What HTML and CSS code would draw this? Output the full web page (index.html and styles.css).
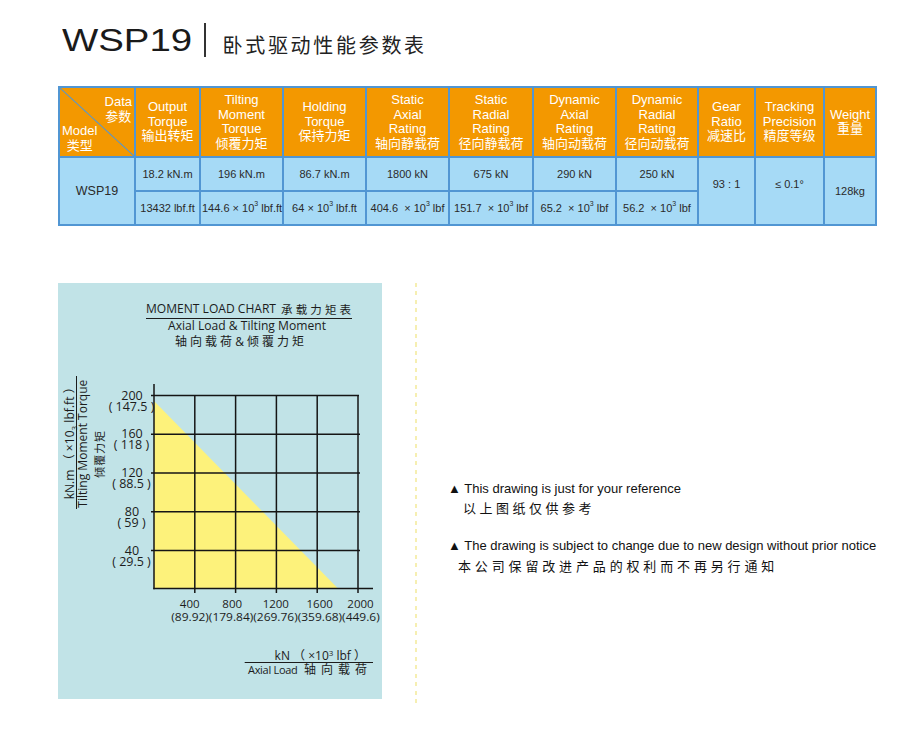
FILE: index.html
```html
<!DOCTYPE html>
<html lang="zh-CN">
<head>
<meta charset="utf-8">
<title>WSP19 卧式驱动性能参数表</title>
<link rel="stylesheet" href="styles.css">
</head>
<body>
<div class="page">
  <header class="title-row">
    <span class="model-name">WSP19</span>
    <span class="title-bar"></span>
    <h1 class="title-cn">卧式驱动性能参数表</h1>
  </header>

  <table class="spec">
    <colgroup>
      <col class="w76"><col class="w65"><col class="w83"><col class="w83"><col class="w83"><col class="w84"><col class="w83"><col class="w82"><col class="w57"><col class="w69"><col class="w52">
    </colgroup>
    <tr class="head">
      <th class="diag">
        <div class="diag-box">
          <span class="d-top">Data<br>参数</span>
          <span class="d-bot">Model<br>类型</span>
        </div>
      </th>
      <th>Output<br>Torque<br>输出转矩</th>
      <th>Tilting<br>Moment<br>Torque<br>倾覆力矩</th>
      <th>Holding<br>Torque<br>保持力矩</th>
      <th>Static<br>Axial<br>Rating<br>轴向静载荷</th>
      <th>Static<br>Radial<br>Rating<br>径向静载荷</th>
      <th>Dynamic<br>Axial<br>Rating<br>轴向动载荷</th>
      <th>Dynamic<br>Radial<br>Rating<br>径向动载荷</th>
      <th>Gear<br>Ratio<br>减速比</th>
      <th>Tracking<br>Precision<br>精度等级</th>
      <th>Weight<br>重量</th>
    </tr>
    <tr class="row">
      <td rowspan="2" class="model-cell">WSP19</td>
      <td>18.2 kN.m</td>
      <td>196 kN.m</td>
      <td>86.7 kN.m</td>
      <td>1800 kN</td>
      <td>675 kN</td>
      <td>290 kN</td>
      <td>250 kN</td>
      <td rowspan="2" class="raised">93 : 1</td>
      <td rowspan="2" class="raised">≤ 0.1°</td>
      <td rowspan="2">128kg</td>
    </tr>
    <tr class="row">
      <td>13432 lbf.ft</td>
      <td>144.6 × 10<sup>3</sup> lbf.ft</td>
      <td>64 × 10<sup>3</sup> lbf.ft</td>
      <td>404.6 &nbsp;× 10<sup>3</sup> lbf</td>
      <td>151.7 &nbsp;× 10<sup>3</sup> lbf</td>
      <td>65.2 &nbsp;× 10<sup>3</sup> lbf</td>
      <td>56.2 &nbsp;× 10<sup>3</sup> lbf</td>
    </tr>
  </table>

  <section class="lower">
    <div class="chart-panel">
      <svg class="chart" width="324" height="416" viewBox="0 0 324 416">
        <text x="88" y="30" class="t12" textLength="130" lengthAdjust="spacingAndGlyphs">MOMENT LOAD CHART</text>
        <text x="223" y="30.5" class="t11" textLength="70">承载力矩表</text>
        <line x1="88" y1="35.5" x2="294" y2="35.5" class="rule"/>
        <text x="110" y="47" class="t12" textLength="158" lengthAdjust="spacingAndGlyphs">Axial Load &amp; Tilting Moment</text>
        <text x="117" y="63" class="t12" textLength="129">轴向载荷&amp;倾覆力矩</text>

        <text transform="translate(16 216.3) rotate(-90)" class="t12" textLength="118">kN.m （ ×10<tspan class="sub" dy="3">3</tspan><tspan dy="-3"> lbf.ft ）</tspan></text>
        <line x1="18.5" y1="93" x2="18.5" y2="226" class="rule"/>
        <text transform="translate(29 224.7) rotate(-90)" class="t12" textLength="128" lengthAdjust="spacingAndGlyphs">Tilting Moment Torque</text>
        <text transform="translate(45.5 194.7) rotate(-90)" class="t10" textLength="46.7">倾覆力矩</text>

        <polygon points="96,118 96,305.5 280,305.5" class="area"/>

        <g class="grid">
          <line x1="93" y1="112.5" x2="301" y2="112.5"/>
          <line x1="93" y1="151.25" x2="302" y2="151.25"/>
          <line x1="93" y1="190" x2="302" y2="190"/>
          <line x1="93" y1="228.75" x2="302" y2="228.75"/>
          <line x1="93" y1="267.5" x2="302" y2="267.5"/>
          <line x1="136.8" y1="112.5" x2="136.8" y2="310"/>
          <line x1="177.6" y1="112.5" x2="177.6" y2="310"/>
          <line x1="218.4" y1="112.5" x2="218.4" y2="310"/>
          <line x1="259.2" y1="112.5" x2="259.2" y2="310"/>
          <line x1="300" y1="112.5" x2="300" y2="310"/>
          <line x1="96" y1="101" x2="96" y2="306.2"/>
          <line x1="95.3" y1="305.5" x2="315" y2="305.5"/>
        </g>

        <g class="ylab">
          <text x="74" y="116.5">200</text>
          <text x="73.5" y="127.5">( 147.5 )</text>
          <text x="74" y="155.25">160</text>
          <text x="73.5" y="166.25">( 118 )</text>
          <text x="74" y="194">120</text>
          <text x="73.5" y="205">( 88.5 )</text>
          <text x="74" y="232.75">80</text>
          <text x="73.5" y="243.75">( 59 )</text>
          <text x="74" y="271.5">40</text>
          <text x="73.5" y="282.5">( 29.5 )</text>
        </g>

        <g class="xlab">
          <text x="131.7" y="324.7">400</text>
          <text x="174.2" y="324.7">800</text>
          <text x="217.8" y="324.7">1200</text>
          <text x="261.7" y="324.7">1600</text>
          <text x="302.5" y="324.7">2000</text>
        </g>
        <text x="113.3" y="338" class="t115" textLength="208.4" lengthAdjust="spacingAndGlyphs">(89.92)(179.84)(269.76)(359.68)(449.6)</text>

        <text x="308" y="376.5" class="t12 end">kN （ ×10<tspan class="sup" dy="-4">3</tspan><tspan dy="4"> lbf ）</tspan></text>
        <line x1="186.7" y1="379.5" x2="315" y2="379.5" class="rule"/>
        <text x="190" y="390.5" class="t11b">Axial Load</text>
        <text x="246" y="391" class="t12" textLength="63">轴向载荷</text>
      </svg>
    </div>
    <div class="divider"></div>
    <div class="notes">
      <p class="note-en">▲ This drawing is just for your reference</p>
      <p class="note-cn n1">以上图纸仅供参考</p>
      <p class="note-en second">▲ The drawing is subject to change due to new design without prior notice</p>
      <p class="note-cn n2">本公司保留改进产品的权利而不再另行通知</p>
    </div>
  </section>
</div>
</body>
</html>
```

FILE: styles.css
```css
* { box-sizing: border-box; }

html, body {
  margin: 0;
  padding: 0;
  background: #ffffff;
}

body {
  font-family: "Liberation Sans", "Noto Sans CJK SC", sans-serif;
  color: #222222;
}

.page {
  width: 924px;
  height: 738px;
  overflow: hidden;
}

/* ---------- title ---------- */
.title-row {
  display: flex;
  align-items: center;
  height: 57px;
  padding-top: 23px;
  padding-left: 62px;
}

.model-name {
  display: inline-block;
  font-family: "Liberation Sans", sans-serif;
  font-size: 32px;
  line-height: 32px;
  color: #1a1a1a;
  transform: scaleX(1.2);
  transform-origin: left center;
}

.title-bar {
  width: 2px;
  height: 34px;
  background: #333333;
  margin-left: 34px;
}

.title-cn {
  margin: 9px 0 0 16px;
  font-family: "Noto Sans CJK SC", sans-serif;
  font-weight: 400;
  font-size: 20px;
  line-height: 24px;
  letter-spacing: 2.7px;
  color: #222222;
}

/* ---------- spec table ---------- */
.spec {
  margin: 29px 0 0 58px;
  width: 819px;
  table-layout: fixed;
  border-collapse: collapse;
  font-family: "Liberation Sans", "Noto Sans CJK SC", sans-serif;
}

.w76 { width: 76px; }
.w65 { width: 65px; }
.w83 { width: 83px; }
.w84 { width: 84px; }
.w82 { width: 82px; }
.w57 { width: 57px; }
.w69 { width: 69px; }
.w52 { width: 52px; }

.spec th,
.spec td {
  border: 2px solid #5196d3;
  padding: 0 1px;
  text-align: center;
  vertical-align: middle;
  white-space: nowrap;
}

.spec .head { height: 70px; }

.spec th {
  background: #f39800;
  color: #ffffff;
  font-weight: 400;
  font-size: 13px;
  line-height: 14.5px;
}

.spec th.diag {
  padding: 0;
  background:
    linear-gradient(to top right, transparent calc(50% - 1px), #5196d3 50%, transparent calc(50% + 1px)),
    #f39800;
}

.diag-box {
  height: 68px;
  display: flex;
  flex-direction: column;
  justify-content: space-between;
  padding: 7px 2px 3px 2px;
}

.d-top {
  align-self: flex-end;
  text-align: center;
}

.d-bot {
  align-self: flex-start;
  text-align: center;
}

.spec .row { height: 34px; }

.spec td {
  background: #a6daf6;
  color: #2a2a2a;
  font-size: 11px;
  line-height: 13px;
}

.spec td.model-cell {
  font-size: 12.5px;
}

.spec td.raised {
  padding-bottom: 13px;
}

.spec sup {
  font-size: 7px;
  line-height: 0;
  position: relative;
  top: -1px;
}

/* ---------- lower section ---------- */
.lower {
  display: flex;
  align-items: flex-start;
  margin-top: 57px;
}

.chart-panel {
  margin-left: 58px;
  width: 324px;
  height: 416px;
  background: #c1e3e7;
}

.chart {
  display: block;
}

.chart text {
  font-family: "Open Sans", "Noto Sans CJK SC", sans-serif;
  fill: #1c1c1c;
}

.chart .t12 { font-size: 12px; }
.chart .t11 { font-size: 11.5px; }
.chart .t11b { font-size: 11px; letter-spacing: -0.3px; }
.chart .t10 { font-size: 11px; }
.chart .t115 { font-size: 11.5px; }
.chart .end { text-anchor: end; }
.chart .sub,
.chart .sup { font-size: 8px; }

.chart .rule {
  stroke: #1c1c1c;
  stroke-width: 1;
}

.chart .area {
  fill: #fdf27b;
}

.chart .grid line {
  stroke: #151515;
  stroke-width: 1.5;
}

.chart .ylab text {
  font-size: 12.5px;
  text-anchor: middle;
}

.chart .xlab text {
  font-size: 11.5px;
  text-anchor: middle;
}

.divider {
  width: 2px;
  height: 421px;
  margin-left: 33px;
  background: repeating-linear-gradient(to bottom, #f6efb2 0 4px, transparent 4px 8.5px);
}

.notes {
  margin: 196px 0 0 31px;
}

.notes p {
  margin: 0;
  line-height: 19px;
  white-space: nowrap;
}

.note-en {
  font-family: "Liberation Sans", "DejaVu Sans", sans-serif;
  font-size: 13px;
  color: #111111;
}

.note-en.second {
  margin-top: 19px;
}

.note-cn {
  font-family: "Noto Sans CJK SC", sans-serif;
  font-size: 13px;
  color: #111111;
}

.note-cn.n1 {
  padding-left: 15px;
  letter-spacing: 3.5px;
}

.note-cn.n2 {
  padding-left: 10px;
  letter-spacing: 3.85px;
  margin-top: 1px;
}
```
